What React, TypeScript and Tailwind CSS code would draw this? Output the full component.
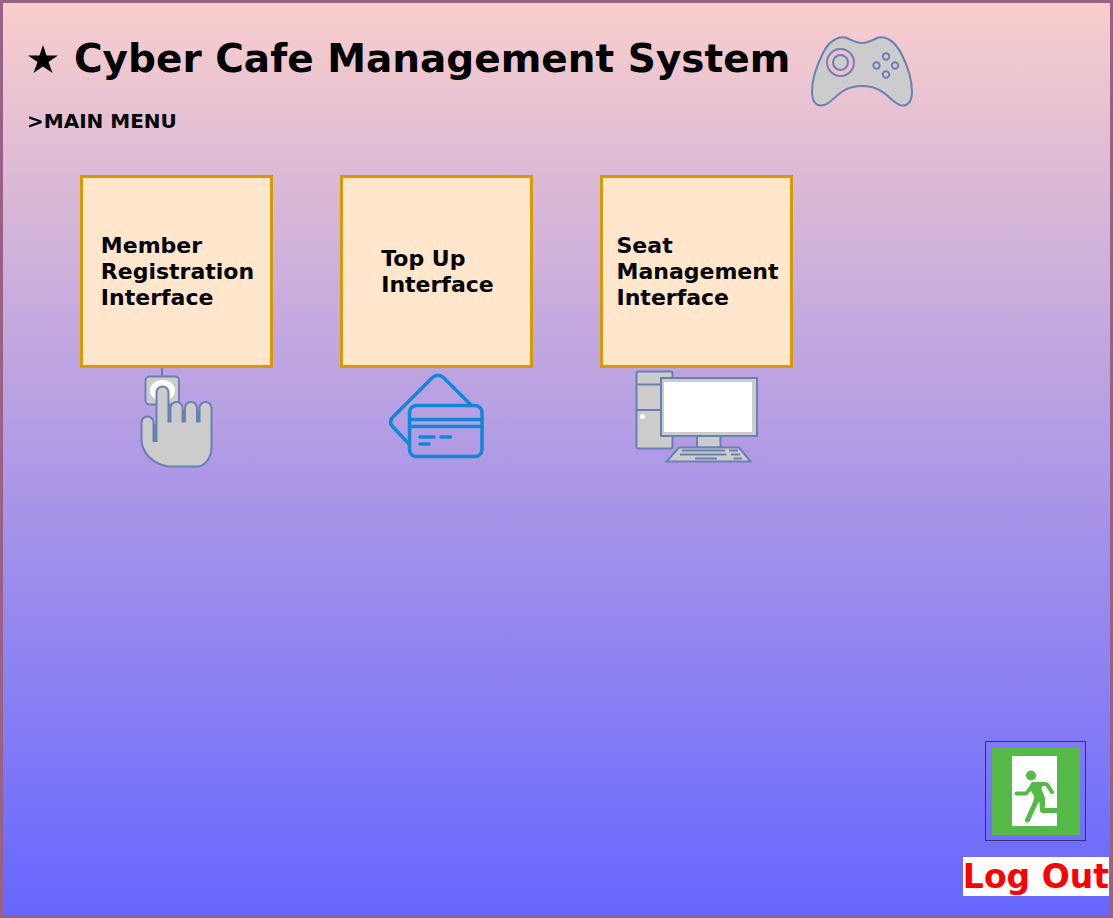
import type { ReactNode } from "react";

function Gamepad() {
  return (
    <svg width="104" height="74" viewBox="0 0 104 74" fill="none" stroke="#6881b3" strokeWidth="2" aria-hidden="true">
      <path
        d="M25 4.500C30 1.500 34 1.500 38 3.500C43 6 46 8 52 8C58 8 61 6 66 3.500C70 1.500 74 1.500 79 4.500C84 7 88 12 92 20C98 32 102 46 102 57C102 66 98 71 92 70.500C81 69 76 51 52 51C29 51 25 67 14 70C6 72 2 67 2 56C2 43 7 30 13 18C17 10 20 7 25 4.500Z"
        fill="#ccc"
      />
      <circle cx="30.500" cy="27.500" r="13.500" fill="#e9c2d0" stroke="#7c7eb0" />
      <circle cx="30.500" cy="27.500" r="7.500" fill="#ccc" />
      <g fill="#e5c0d2">
        <circle cx="76" cy="21.500" r="3.200" />
        <circle cx="66.500" cy="30.500" r="3.200" />
        <circle cx="85" cy="30.500" r="3.200" />
        <circle cx="76" cy="39.500" r="3.200" />
      </g>
    </svg>
  );
}

function PressHand() {
  return (
    <svg width="76" height="102" viewBox="139 368 76 102" fill="none" stroke="#6881b3" strokeWidth="2" aria-hidden="true">
      <path d="M162 367V376" />
      <rect x="145.500" y="376.500" width="33.500" height="28" rx="4" fill="#ccc" />
      <ellipse cx="162.500" cy="390.500" rx="12.500" ry="10.500" fill="#fff" stroke="none" />
      <path
        d="M141.500 439V422.500A6 6 0 0 1 153.500 422.500V441H156.500V392.500A6 6 0 0 1 168.500 392.500V421.500H170.500V408A6 6 0 0 1 182.500 408V421.500H185V408A6 6 0 0 1 197 408V421.500H199.500V408A6 6 0 0 1 211.500 408V447C211.500 456 207 464 199 466.500H168C153 464 141.500 453 141.500 439Z"
        fill="#ccc"
      />
      <path d="M155 424V441M169.500 404V421M184 410V421M198.500 410V421" strokeWidth="3" />
    </svg>
  );
}

function Cards() {
  return (
    <svg width="96" height="88" viewBox="389 372 96 88" fill="none" stroke="#1187d8" strokeWidth="3.500" strokeLinecap="round" aria-hidden="true">
      <path d="M409 444L393 427Q388 422 393 417L432.500 377.500Q438 373 443.500 377.500L470 404" />
      <rect x="409.500" y="405.500" width="72.500" height="51" rx="7" />
      <path d="M410 419.500H482M410 426.500H482M420 437H434M441 437H450.500M420 444H429" />
    </svg>
  );
}

function Computer() {
  return (
    <svg width="124" height="94" viewBox="635 370 124 94" fill="#ccc" stroke="#6881b3" strokeWidth="2" aria-hidden="true">
      <rect x="636.500" y="371.500" width="36" height="77" rx="2" />
      <path d="M636 384.500H673M636 410H673" />
      <circle cx="642.500" cy="416.500" r="2.500" fill="#fff" stroke="none" />
      <rect x="661" y="378" width="96" height="58" />
      <rect x="664" y="382" width="88" height="50" fill="#fff" stroke="none" />
      <rect x="697" y="436" width="23.500" height="11.500" />
      <path d="M679 447.500H739L750.500 461.500H666.500Z" />
      <path d="M682 450.500H725M729 450.500H738M680 454.500H726.500M731 454.500H740M695 458.500H717M733.500 458.500H742" />
    </svg>
  );
}

function ExitSign() {
  return (
    <svg width="88" height="87" viewBox="993 748 88 87" aria-hidden="true">
      <rect x="993" y="748" width="88" height="87" fill="#55b948" />
      <rect x="1013" y="756" width="45" height="70" fill="#fff" />
      <circle cx="1032" cy="775.500" r="5" fill="#55b948" />
      <g fill="none" stroke="#55b948" strokeWidth="4" strokeLinecap="round" strokeLinejoin="round">
        <path d="M1017.500 793.500H1027Q1028 793.500 1034 784H1046Q1048 784 1049 786L1053 792" />
        <path d="M1039 797L1028.500 820" strokeWidth="5" />
        <path d="M1042.500 796L1043.500 810.500H1058" strokeWidth="5" strokeLinecap="butt" />
      </g>
      <path d="M1033 782H1044L1042.500 789L1046 798V806L1041.500 806L1041 801L1037 805L1034.500 800L1035.500 797L1031 789Z" fill="#55b948" />
    </svg>
  );
}

function MenuItem({ label, icon }: { label: ReactNode; icon: ReactNode }) {
  return (
    <li className="flex flex-col items-center">
      <button
        type="button"
        className="flex size-[193px] items-center justify-center border-3 border-[#d79b00] bg-[#ffe6cc] pl-0.5 text-left text-[22px] leading-[26px] font-bold"
      >
        <span>{label}</span>
      </button>
      {icon}
    </li>
  );
}

export default function App() {
  return (
    <main className="flex min-h-screen flex-col border-3 border-[#996185] bg-[linear-gradient(to_bottom,#f8cecc,#6666ff)] font-['DejaVu_Sans',Verdana,sans-serif] text-black">
      <header className="px-6 pt-8">
        <div className="flex items-start gap-5">
          <h1 className="flex items-center gap-4 pl-px text-[39px] leading-[48px] font-bold whitespace-nowrap">
            <svg width="30" height="28" viewBox="0 0 30 28" aria-hidden="true">
              <path d="M15 0L18.500 10.500H30L20.500 17L24.500 28L15 21.500L5.500 28L9.500 17L0 10.500H11.500Z" />
            </svg>
            Cyber Cafe Management System
          </h1>
          <Gamepad />
        </div>
        <h2 className="text-[20px] leading-[24px] font-bold">&gt;MAIN MENU</h2>
      </header>
      <nav aria-label="Main menu" className="px-[77px] pt-[42px]">
        <ul className="flex flex-wrap gap-[67px]">
          <MenuItem label={<>Member<br />Registration<br />Interface</>} icon={<PressHand />} />
          <MenuItem label={<>Top Up<br />Interface</>} icon={<div className="pt-1"><Cards /></div>} />
          <MenuItem label={<>Seat<br />Management<br />Interface</>} icon={<div className="pt-0.5"><Computer /></div>} />
        </ul>
      </nav>
      <button type="button" className="mt-auto mr-px mb-[19px] flex flex-col items-center gap-4 self-end">
        <span className="flex h-[100px] w-[101px] items-center justify-center border border-[#343078]">
          <ExitSign />
        </span>
        <span className="bg-white text-[33px] leading-[39px] font-bold text-[#ff0000]">Log Out</span>
      </button>
    </main>
  );
}
